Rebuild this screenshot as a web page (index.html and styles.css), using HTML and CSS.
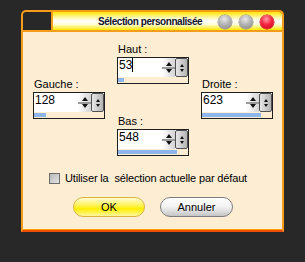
FILE: index.html
```html
<!DOCTYPE html>
<html lang="fr">
<head>
  <meta charset="UTF-8">
  <title>Sélection personnalisée</title>
  <link rel="stylesheet" href="styles.css">
</head>
<body>

<div class="window">
  <div class="titlebar">
    <div class="sysbox"></div>
    <div class="caption">
      <span class="title">Sélection personnalisée</span>
      <span class="dot"></span>
      <span class="dot"></span>
      <span class="dot close"></span>
    </div>
  </div>

  <div class="content">
    <div class="fields">
      <div class="col side">
        <div class="group">
          <div class="label">Gauche :</div>
          <div class="spinbox">
            <div class="row"><span class="value">128</span><span class="arrows"></span><span class="knob"></span></div>
            <div class="strip"><span class="bar" style="width:12px"></span></div>
          </div>
        </div>
      </div>

      <div class="col">
        <div class="group">
          <div class="label">Haut :</div>
          <div class="spinbox">
            <div class="row"><span class="value"><span class="caret">53</span></span><span class="arrows"></span><span class="knob"></span></div>
            <div class="strip"><span class="bar" style="width:6px"></span></div>
          </div>
        </div>
        <div class="group low">
          <div class="label">Bas :</div>
          <div class="spinbox">
            <div class="row"><span class="value">548</span><span class="arrows"></span><span class="knob"></span></div>
            <div class="strip"><span class="bar" style="width:59px"></span></div>
          </div>
        </div>
      </div>

      <div class="col side">
        <div class="group">
          <div class="label">Droite :</div>
          <div class="spinbox">
            <div class="row"><span class="value">623</span><span class="arrows"></span><span class="knob"></span></div>
            <div class="strip"><span class="bar" style="width:59px"></span></div>
          </div>
        </div>
      </div>
    </div>

    <div class="check"><span class="box"></span>Utiliser la&nbsp; sélection actuelle par défaut</div>

    <div class="buttons">
      <button class="btn ok">OK</button>
      <button class="btn cancel">Annuler</button>
    </div>
  </div>
</div>

</body>
</html>
```

FILE: styles.css
```css
body {
  margin: 0;
  background: #282828;
  font-family: "Liberation Sans", Arial, sans-serif;
  font-size: 11px;
  color: #000;
}

.window {
  margin: 10px 0 0 21px;
  width: 263px;
  box-sizing: border-box;
  border: 2px solid #f59c1a;
  border-bottom: 2px solid #ee4c00;
  border-radius: 5px 5px 0 0;
  overflow: hidden;
}

/* barre de titre */
.titlebar {
  display: flex;
  height: 20px;
  box-sizing: border-box;
  border-bottom: 2px solid #f59c1a;
}
.sysbox {
  width: 30px;
  box-sizing: border-box;
  border-right: 2px solid #f59c1a;
}
.caption {
  flex: 1;
  display: flex;
  align-items: center;
  padding: 1px 8px 0 45px;
  background: linear-gradient(#ffe600, #fff7a8 30%, #fff 50%, #fffbd0 70%, #ffe800);
}
.title {
  font-size: 10px;
  font-weight: bold;
  letter-spacing: -0.45px;
  color: #14142a;
  margin-right: auto;
}
.dot {
  width: 14px;
  height: 14px;
  border-radius: 50%;
  margin-left: 7px;
  background: radial-gradient(circle at 45% 30%, #e8e8e8, #b4b4b4 45%, #7e7e7e 100%);
  box-shadow: 0 0 0 0.5px #8a8a8a;
}
.dot.close {
  background: radial-gradient(circle at 45% 30%, #ff9aa8, #f4243f 45%, #c8001c 100%);
  box-shadow: 0 0 0 0.5px #c0102a;
}

/* zone principale */
.content {
  background: #fdedd3;
  padding: 11px 9px 12px 10px;
  border-bottom: 1px solid #ffa000;
}
.fields {
  display: grid;
  grid-template-columns: repeat(3, 72px);
  column-gap: 12px;
}
.col.side { padding-top: 35px; }
.group.low { margin-top: 31px; }
.label {
  height: 13px;
  line-height: 13px;
  margin-bottom: 1px;
  padding-left: 1px;
}

.spinbox {
  width: 72px;
  box-sizing: border-box;
  border: 1px solid #202020;
  background: #fdedd3;
}
.spinbox .row {
  display: flex;
  height: 19px;
  background: #fff;
}
.value {
  flex: 1;
  font-size: 12px;
  line-height: 15px;
  padding-left: 1px;
}
.caret {
  border-right: 1px solid #000;
}
.arrows {
  width: 13px;
  display: flex;
  flex-direction: column;
  align-items: center;
  justify-content: space-around;
  padding: 2px 0;
  box-sizing: border-box;
  background:
    linear-gradient(to bottom, transparent 48%, #9a9a9a 48%, #9a9a9a 56%, transparent 56%),
    linear-gradient(to right, #fff, #d4d4d4);
}
.arrows::before {
  content: "";
  border-left: 3.5px solid transparent;
  border-right: 3.5px solid transparent;
  border-bottom: 4px solid #111;
}
.arrows::after {
  content: "";
  border-left: 3.5px solid transparent;
  border-right: 3.5px solid transparent;
  border-top: 4px solid #111;
}
.knob {
  width: 13px;
  box-sizing: border-box;
  border: 1px solid #505050;
  border-radius: 2px;
  display: flex;
  flex-direction: column;
  align-items: center;
  justify-content: center;
  gap: 2px;
  background: linear-gradient(to right, #e6e6e6, #b4b4b4);
}
.knob::before {
  content: "";
  border-left: 2.5px solid transparent;
  border-right: 2.5px solid transparent;
  border-bottom: 3px solid #111;
}
.knob::after {
  content: "";
  border-left: 2.5px solid transparent;
  border-right: 2.5px solid transparent;
  border-top: 3px solid #111;
}
.strip {
  height: 6px;
  padding-top: 1px;
  box-sizing: border-box;
}
.bar {
  display: block;
  height: 4px;
  background: #8db6ea;
}

/* case a cocher */
.check {
  display: flex;
  align-items: center;
  margin: 16px 0 0 16px;
  height: 13px;
  line-height: 13px;
  letter-spacing: -0.15px;
}
.check .box {
  width: 11px;
  height: 11px;
  box-sizing: border-box;
  border: 1px solid #6c6c6c;
  background: linear-gradient(135deg, #b8b8b8, #e4e4e4);
  margin-right: 5px;
}

/* boutons */
.buttons {
  display: flex;
  gap: 15px;
  margin: 12px 0 0 40px;
}
.btn {
  width: 72px;
  height: 20px;
  border-radius: 10px;
  font-family: "Liberation Sans", Arial, sans-serif;
  font-size: 11px;
  color: #000;
  padding: 0;
}
.btn.ok {
  border: 1px solid #d9b43c;
  background: linear-gradient(#fffbd6, #fff24a 45%, #ffee00 60%, #fff6a0);
}
.btn.cancel {
  width: 73px;
  border: 1px solid #7e7e7e;
  background: linear-gradient(#ffffff, #f4f4f4 45%, #dcdcdc 75%, #c4c4c4);
}
```
